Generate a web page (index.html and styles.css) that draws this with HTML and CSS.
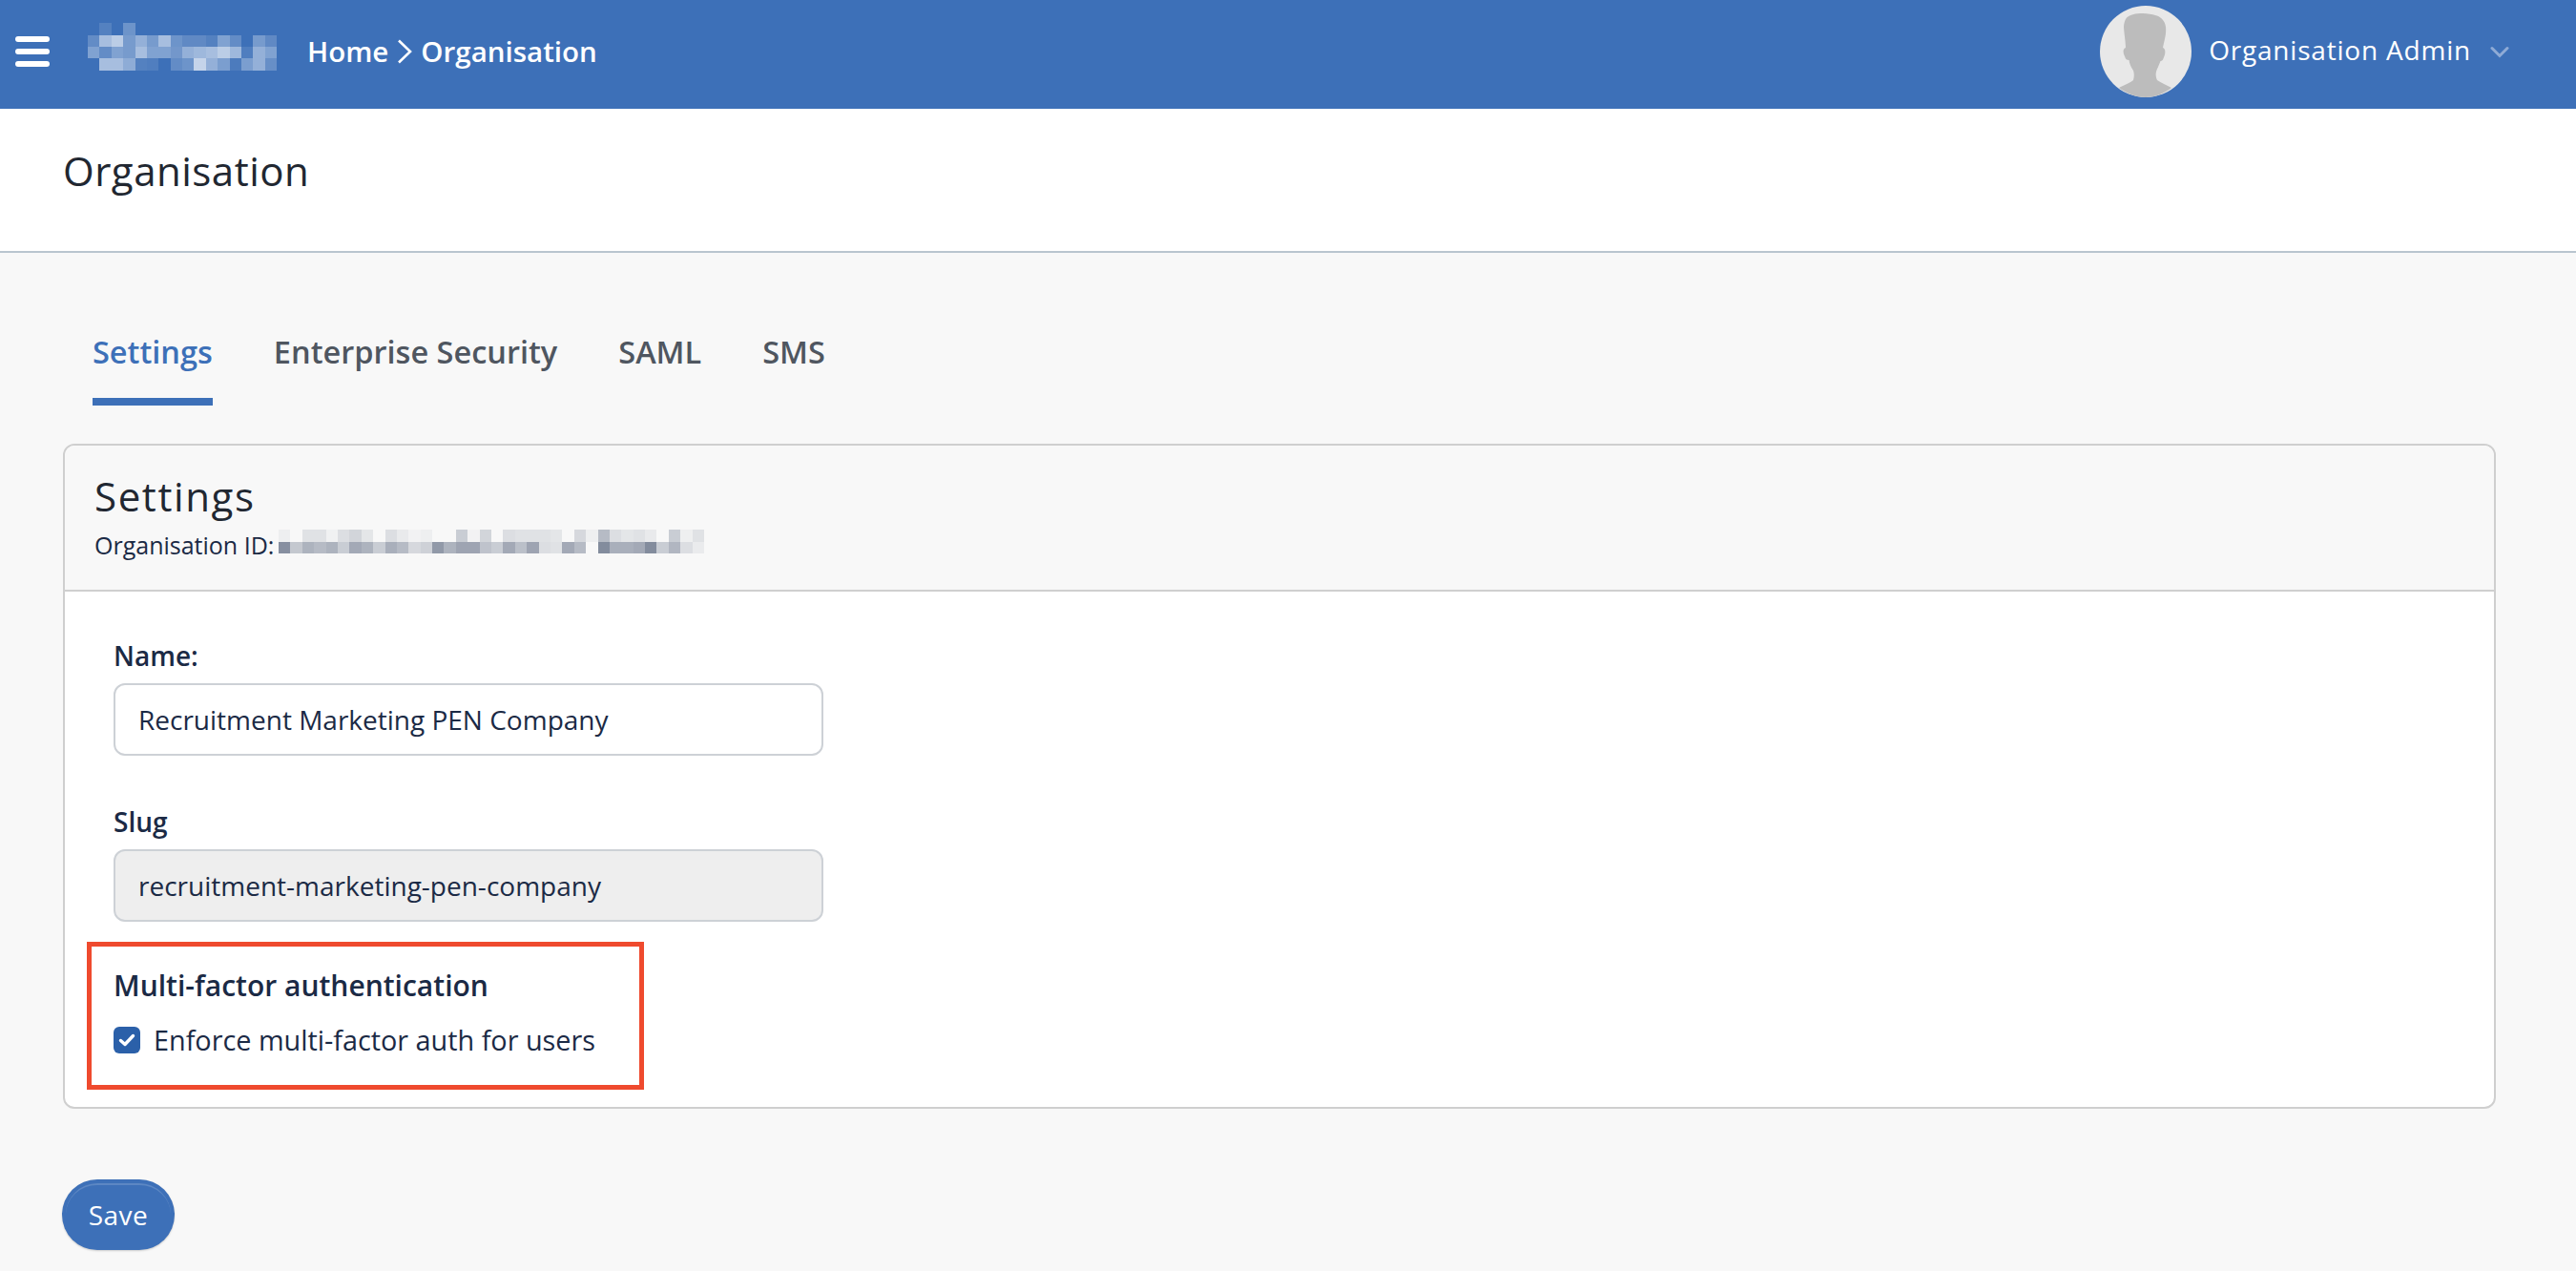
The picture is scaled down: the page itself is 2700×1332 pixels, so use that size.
FILE: index.html
```html
<!DOCTYPE html>
<html lang="en">
<head>
<meta charset="utf-8">
<title>Organisation</title>
<link rel="stylesheet" href="styles.css">
</head>
<body>
<header class="topbar">
  <button class="burger" aria-label="Menu"><span></span><span></span><span></span></button>
  <svg class="logo" width="198" height="50" viewBox="0 0 16 4" shape-rendering="crispEdges" fill="#fff">
    <rect x="1" y="0" width="1" height="1" opacity=".12"/><rect x="3" y="0" width="1" height="1" opacity=".25"/>
    <rect x="0" y="1" width="1" height="1" opacity=".2"/><rect x="1" y="1" width="1" height="1" opacity=".55"/><rect x="2" y="1" width="1" height="1" opacity=".65"/><rect x="3" y="1" width="1" height="1" opacity=".3"/><rect x="4" y="1" width="1" height="1" opacity=".45"/><rect x="5" y="1" width="1" height="1" opacity=".3"/><rect x="6" y="1" width="1" height="1" opacity=".55"/><rect x="7" y="1" width="1" height="1" opacity=".25"/><rect x="8" y="1" width="2" height="1" opacity=".18"/><rect x="10" y="1" width="1" height="1" opacity=".12"/><rect x="11" y="1" width="1" height="1" opacity=".35"/><rect x="12" y="1" width="1" height="1" opacity=".2"/><rect x="14" y="1" width="1" height="1" opacity=".3"/><rect x="15" y="1" width="1" height="1" opacity=".18"/>
    <rect x="0" y="2" width="1" height="1" opacity=".35"/><rect x="1" y="2" width="1" height="1" opacity=".2"/><rect x="2" y="2" width="1" height="1" opacity=".35"/><rect x="3" y="2" width="1" height="1" opacity=".3"/><rect x="4" y="2" width="1" height="1" opacity=".55"/><rect x="5" y="2" width="2" height="1" opacity=".35"/><rect x="7" y="2" width="1" height="1" opacity=".28"/><rect x="8" y="2" width="1" height="1" opacity=".45"/><rect x="9" y="2" width="1" height="1" opacity=".5"/><rect x="10" y="2" width="1" height="1" opacity=".55"/><rect x="11" y="2" width="1" height="1" opacity=".65"/><rect x="12" y="2" width="1" height="1" opacity=".5"/><rect x="13" y="2" width="1" height="1" opacity=".1"/><rect x="14" y="2" width="1" height="1" opacity=".45"/><rect x="15" y="2" width="1" height="1" opacity=".35"/>
    <rect x="1" y="3" width="2" height="1" opacity=".55"/><rect x="3" y="3" width="1" height="1" opacity=".42"/><rect x="4" y="3" width="1" height="1" opacity=".12"/><rect x="5" y="3" width="1" height="1" opacity=".1"/><rect x="7" y="3" width="1" height="1" opacity=".2"/><rect x="8" y="3" width="1" height="1" opacity=".25"/><rect x="9" y="3" width="1" height="1" opacity=".7"/><rect x="10" y="3" width="1" height="1" opacity=".45"/><rect x="11" y="3" width="1" height="1" opacity=".32"/><rect x="12" y="3" width="1" height="1" opacity=".08"/><rect x="13" y="3" width="1" height="1" opacity=".32"/><rect x="14" y="3" width="1" height="1" opacity=".45"/><rect x="15" y="3" width="1" height="1" opacity=".22"/>
  </svg>
  <nav class="crumbs">
    <span>Home</span>
    <svg class="crumb-sep" width="16" height="26" viewBox="0 0 16 26" fill="none" stroke="#fff" stroke-width="2.6"><path d="M2 1.500 14 13 2 24.500"/></svg>
    <span>Organisation</span>
  </nav>
  <div class="user">
    <svg class="avatar" width="96" height="96" viewBox="0 0 96 96">
      <circle cx="48" cy="48" r="48" fill="#e8e8e8"/>
      <path fill="#bcbcbc" d="M27 14C30 9 38 8 45 8C50 8 55 9 58 10C63 11 68 15 69 22C70 30 67 38 66 44C69 45 69 50 67 54C66 57 65 58 63.500 58C62 62 60 66 59 69C58 72 59 76 60 78C64 81 70 83 75 86C67 92 58 96 48 96C38 96 28 92 20 86C25 83 32 81 35 78C36 74 36 71 35 68C33 65 31 61 30.500 57C28 57 27 56 26 53C24 49 24 45 27 44C27 38 25 26 25 22C25 19 26 16 27 14Z"/>
    </svg>
    <span class="user-name">Organisation Admin</span>
    <svg class="user-caret" width="20" height="13" viewBox="0 0 20 13" fill="none" stroke="#8fabd6" stroke-width="3" stroke-linecap="round"><path d="M2 2.500 10 10.500 18 2.500"/></svg>
  </div>
</header>

<section class="page-title"><h1>Organisation</h1></section>

<main class="content">
  <div class="tabs">
    <a class="tab active">Settings</a>
    <a class="tab">Enterprise Security</a>
    <a class="tab">SAML</a>
    <a class="tab">SMS</a>
  </div>

  <section class="card">
    <div class="card-head">
      <h2>Settings</h2>
      <div class="org-id">
        <span>Organisation ID:</span>
        <svg class="redacted" width="446" height="25" viewBox="0 0 36 2" preserveAspectRatio="none" shape-rendering="crispEdges" fill="#3c4a66">
          <rect x="0" y="0" width="1" height="1" opacity=".05"/><rect x="2" y="0" width="2" height="1" opacity=".13"/><rect x="4" y="0" width="1" height="1" opacity=".04"/><rect x="5" y="0" width="1" height="1" opacity=".15"/><rect x="6" y="0" width="1" height="1" opacity=".2"/><rect x="7" y="0" width="1" height="1" opacity=".1"/><rect x="9" y="0" width="1" height="1" opacity=".15"/><rect x="10" y="0" width="1" height="1" opacity=".08"/><rect x="11" y="0" width="1" height="1" opacity=".03"/><rect x="12" y="0" width="1" height="1" opacity=".05"/><rect x="15" y="0" width="1" height="1" opacity=".25"/><rect x="16" y="0" width="1" height="1" opacity=".03"/><rect x="17" y="0" width="1" height="1" opacity=".2"/><rect x="19" y="0" width="1" height="1" opacity=".15"/><rect x="20" y="0" width="2" height="1" opacity=".13"/><rect x="22" y="0" width="1" height="1" opacity=".12"/><rect x="23" y="0" width="1" height="1" opacity=".1"/><rect x="25" y="0" width="1" height="1" opacity=".18"/><rect x="26" y="0" width="1" height="1" opacity=".05"/><rect x="27" y="0" width="1" height="1" opacity=".35"/><rect x="28" y="0" width="1" height="1" opacity=".15"/><rect x="29" y="0" width="1" height="1" opacity=".1"/><rect x="30" y="0" width="1" height="1" opacity=".12"/><rect x="31" y="0" width="1" height="1" opacity=".08"/><rect x="33" y="0" width="1" height="1" opacity=".25"/><rect x="34" y="0" width="1" height="1" opacity=".05"/><rect x="35" y="0" width="1" height="1" opacity=".12"/>
          <rect x="0" y="1" width="1" height="1" opacity=".6"/><rect x="1" y="1" width="1" height="1" opacity=".28"/><rect x="2" y="1" width="1" height="1" opacity=".4"/><rect x="3" y="1" width="1" height="1" opacity=".35"/><rect x="4" y="1" width="1" height="1" opacity=".4"/><rect x="5" y="1" width="1" height="1" opacity=".25"/><rect x="6" y="1" width="1" height="1" opacity=".45"/><rect x="7" y="1" width="1" height="1" opacity=".4"/><rect x="8" y="1" width="1" height="1" opacity=".25"/><rect x="9" y="1" width="1" height="1" opacity=".42"/><rect x="10" y="1" width="1" height="1" opacity=".35"/><rect x="11" y="1" width="1" height="1" opacity=".18"/><rect x="12" y="1" width="1" height="1" opacity=".22"/><rect x="13" y="1" width="1" height="1" opacity=".55"/><rect x="14" y="1" width="1" height="1" opacity=".4"/><rect x="15" y="1" width="2" height="1" opacity=".48"/><rect x="17" y="1" width="1" height="1" opacity=".3"/><rect x="18" y="1" width="1" height="1" opacity=".25"/><rect x="19" y="1" width="1" height="1" opacity=".45"/><rect x="20" y="1" width="1" height="1" opacity=".32"/><rect x="21" y="1" width="1" height="1" opacity=".48"/><rect x="22" y="1" width="1" height="1" opacity=".15"/><rect x="23" y="1" width="1" height="1" opacity=".12"/><rect x="24" y="1" width="1" height="1" opacity=".45"/><rect x="25" y="1" width="1" height="1" opacity=".35"/><rect x="27" y="1" width="1" height="1" opacity=".62"/><rect x="28" y="1" width="2" height="1" opacity=".42"/><rect x="30" y="1" width="1" height="1" opacity=".45"/><rect x="31" y="1" width="1" height="1" opacity=".62"/><rect x="32" y="1" width="1" height="1" opacity=".25"/><rect x="33" y="1" width="1" height="1" opacity=".38"/><rect x="34" y="1" width="1" height="1" opacity=".15"/><rect x="35" y="1" width="1" height="1" opacity=".07"/>
        </svg>
      </div>
    </div>
    <div class="card-body">
      <div class="field">
        <label class="field-label">Name:</label>
        <div class="input">Recruitment Marketing PEN Company</div>
      </div>
      <div class="field">
        <label class="field-label">Slug</label>
        <div class="input input-disabled">recruitment-marketing-pen-company</div>
      </div>
      <div class="mfa">
        <div class="mfa-title">Multi-factor authentication</div>
        <div class="check-row">
          <span class="checkbox"><svg width="18" height="14" viewBox="0 0 18 14" fill="none" stroke="#fff" stroke-width="3.400" stroke-linecap="round" stroke-linejoin="round"><path d="M2.500 7.500 7 11.500 15.500 2.500"/></svg></span>
          <span>Enforce multi-factor auth for users</span>
        </div>
      </div>
    </div>
  </section>

  <button class="save">Save</button>
</main>
</body>
</html>
```
FILE: styles.css
```css
*, *::before, *::after { box-sizing: border-box; }
html, body { margin: 0; padding: 0; }
body {
  width: 2700px;
  height: 1332px;
  overflow: hidden;
  background: #f8f8f8;
  font-family: "Open Sans", "Liberation Sans", sans-serif;
  color: #1b2a45;
}
.topbar {
  height: 114px;
  background: #3d70b8;
  display: flex;
  align-items: center;
  padding: 0 0 6px 16px;
  color: #fff;
}
.burger {
  width: 36px;
  height: 32px;
  padding: 0;
  margin: 0 40px 0 0;
  border: 0;
  background: none;
  display: flex;
  flex-direction: column;
  justify-content: space-between;
}
.burger span { display: block; height: 6px; border-radius: 3px; background: #fff; }
.logo { display: block; margin: 0 32px 10px 0; }
.crumbs {
  display: flex;
  align-items: center;
  gap: 9px;
  font-size: 29.5px;
  font-weight: 600;
  line-height: 40px;
}
.crumb-sep { display: block; }
.user {
  margin-left: auto;
  margin-right: 70px;
  display: flex;
  align-items: center;
}
.avatar { display: block; margin-right: 18px; }
.user-name { font-size: 28px; line-height: 38px; letter-spacing: .8px; margin-right: 20px; margin-top: -4px; }
.user-caret { display: block; }
.page-title {
  height: 151px;
  background: #fff;
  border-bottom: 2px solid #b9c5cf;
  padding: 0 66px 20px;
  display: flex;
  align-items: center;
}
.page-title h1 {
  margin: 0;
  font-size: 42px;
  font-weight: 400;
  letter-spacing: .5px;
  line-height: 56px;
  color: #212731;
}
.content { padding: 0 84px 0 66px; }
.tabs { display: flex; padding: 0 0 0 31px; gap: 64px; height: 160px; margin-bottom: 40px; }
.tab {
  font-size: 32.5px;
  font-weight: 600;
  line-height: 44px;
  color: #4f5660;
  padding-top: 82px;
  height: 160px;
}
.tab.active { color: #3d70b8; border-bottom: 8px solid #3d70b8; }
.card {
  width: 2550px;
  height: 697px;
  border: 2px solid #cfcfcf;
  border-radius: 12px;
  background: #fff;
  overflow: hidden;
}
.card-head {
  height: 153px;
  background: #f8f8f8;
  border-bottom: 2px solid #cfcfcf;
  padding: 25px 31px 0;
}
.card-head h2 {
  margin: 0;
  font-size: 42px;
  font-weight: 400;
  letter-spacing: 1.6px;
  line-height: 56px;
  color: #212731;
}
.org-id {
  display: flex;
  align-items: flex-start;
  gap: 5px;
  font-size: 25px;
  line-height: 34px;
  margin-top: 6px;
}
.redacted { display: block; margin-top: 1px; }
.card-body { padding: 48px 0 0 51px; }
.field { width: 744px; margin-bottom: 50px; }
.field-label {
  display: block;
  font-size: 28px;
  font-weight: 600;
  line-height: 38px;
  margin-bottom: 10px;
}
.input {
  height: 76px;
  border: 2px solid #cdd1d6;
  border-radius: 12px;
  background: #fff;
  padding: 0 24px;
  font-size: 28px;
  line-height: 72px;
}
.input-disabled { background: #eeeeee; }
.mfa { position: relative; margin-top: -2px; }
.mfa::before {
  content: "";
  position: absolute;
  left: -28px;
  top: -27px;
  width: 584px;
  height: 155px;
  border: 5px solid #ef4a2e;
}
.mfa-title {
  font-size: 30px;
  font-weight: 600;
  line-height: 38px;
}
.check-row {
  display: flex;
  align-items: center;
  gap: 14px;
  margin-top: 19px;
  font-size: 28.8px;
  line-height: 38px;
}
.checkbox {
  width: 28px;
  height: 28px;
  border-radius: 6px;
  background: #2b60a9;
  display: flex;
  align-items: center;
  justify-content: center;
}
.save {
  position: relative;
  display: block;
  width: 118px;
  height: 74px;
  margin: 74px 0 0 -1px;
  border: 0;
  border-radius: 37px;
  background: #3d70b8;
  box-shadow: 0 1px 2px rgba(0,0,0,.18);
  color: #fff;
  font-family: inherit;
  font-size: 28px;
  letter-spacing: .5px;
  line-height: 74px;
  padding: 0;
}
.save::before {
  content: "";
  position: absolute;
  inset: 4px;
  border-radius: 33px;
  border-top: 2px solid rgba(255,255,255,.16);
}
```
